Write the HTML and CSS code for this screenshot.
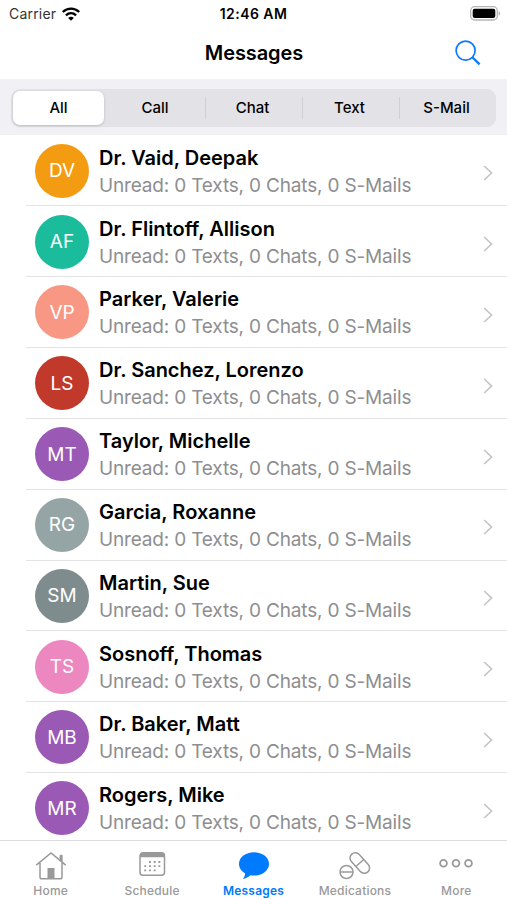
FILE: index.html
```
<!DOCTYPE html>
<html lang="en">
<head>
  <meta charset="UTF-8" />
  <meta name="viewport" content="width=device-width, initial-scale=1.0"/>
  <title>Messages</title>
  <link rel="stylesheet" href="styles.css">
</head>
<body>
  <div class="app">
    <div class="status-bar">
      <div class="carrier">
        <span>Carrier</span>
        <svg width="18" height="14" viewBox="0 0 18 14" fill="none" stroke="#000" stroke-width="2.3">
          <path d="M.8 5C5.500 .4 12.500 .4 17.200 5"/>
          <path d="M3.900 8.300c3-2.800 7.200-2.800 10.200 0"/>
          <path d="M9 13.700 6.200 10.900c1.600-1.500 4-1.500 5.600 0z" fill="#000" stroke="none"/>
        </svg>
      </div>
      <div class="time">12:46 AM</div>
      <div class="battery">
        <svg width="31" height="15" viewBox="0 0 31 15">
          <rect x=".7" y=".7" width="26.600" height="13.300" rx="4" fill="#fff" stroke="#b5b5b5" stroke-width="1.300"/>
          <rect x="2.700" y="2.700" width="22.600" height="9.400" rx="2" fill="#000"/>
          <path d="M28.600 5.200c2 .6 2 3.800 0 4.400z" fill="#b5b5b5"/>
        </svg>
      </div>
    </div>

    <div class="nav-bar">
      <h1>Messages</h1>
      <svg class="search" width="26" height="26" viewBox="0 0 26 26" fill="none" stroke="#0a7aff">
        <circle cx="10.600" cy="10.600" r="9.500" stroke-width="1.700"/>
        <path d="M17.300 17.300l7.300 7.100" stroke-width="2.300"/>
      </svg>
    </div>

    <div class="filter">
      <div class="segments">
        <div class="segment active">All</div>
        <div class="segment">Call</div>
        <div class="segment">Chat</div>
        <div class="segment">Text</div>
        <div class="segment">S-Mail</div>
      </div>
    </div>

    <div class="list">
      <div class="row">
        <div class="avatar orange">DV</div>
        <div class="info"><h2>Dr. Vaid, Deepak</h2><p>Unread: 0 Texts, 0 Chats, 0 S-Mails</p></div>
        <svg class="chevron" width="10" height="16" viewBox="0 0 10 16"><path d="M1.200 1l7.300 7-7.300 7"/></svg>
      </div>
      <div class="row">
        <div class="avatar green">AF</div>
        <div class="info"><h2>Dr. Flintoff, Allison</h2><p>Unread: 0 Texts, 0 Chats, 0 S-Mails</p></div>
        <svg class="chevron" width="10" height="16" viewBox="0 0 10 16"><path d="M1.200 1l7.300 7-7.300 7"/></svg>
      </div>
      <div class="row">
        <div class="avatar salmon">VP</div>
        <div class="info"><h2>Parker, Valerie</h2><p>Unread: 0 Texts, 0 Chats, 0 S-Mails</p></div>
        <svg class="chevron" width="10" height="16" viewBox="0 0 10 16"><path d="M1.200 1l7.300 7-7.300 7"/></svg>
      </div>
      <div class="row">
        <div class="avatar red">LS</div>
        <div class="info"><h2>Dr. Sanchez, Lorenzo</h2><p>Unread: 0 Texts, 0 Chats, 0 S-Mails</p></div>
        <svg class="chevron" width="10" height="16" viewBox="0 0 10 16"><path d="M1.200 1l7.300 7-7.300 7"/></svg>
      </div>
      <div class="row">
        <div class="avatar purple">MT</div>
        <div class="info"><h2>Taylor, Michelle</h2><p>Unread: 0 Texts, 0 Chats, 0 S-Mails</p></div>
        <svg class="chevron" width="10" height="16" viewBox="0 0 10 16"><path d="M1.200 1l7.300 7-7.300 7"/></svg>
      </div>
      <div class="row">
        <div class="avatar silver">RG</div>
        <div class="info"><h2>Garcia, Roxanne</h2><p>Unread: 0 Texts, 0 Chats, 0 S-Mails</p></div>
        <svg class="chevron" width="10" height="16" viewBox="0 0 10 16"><path d="M1.200 1l7.300 7-7.300 7"/></svg>
      </div>
      <div class="row">
        <div class="avatar gray">SM</div>
        <div class="info"><h2>Martin, Sue</h2><p>Unread: 0 Texts, 0 Chats, 0 S-Mails</p></div>
        <svg class="chevron" width="10" height="16" viewBox="0 0 10 16"><path d="M1.200 1l7.300 7-7.300 7"/></svg>
      </div>
      <div class="row">
        <div class="avatar pink">TS</div>
        <div class="info"><h2>Sosnoff, Thomas</h2><p>Unread: 0 Texts, 0 Chats, 0 S-Mails</p></div>
        <svg class="chevron" width="10" height="16" viewBox="0 0 10 16"><path d="M1.200 1l7.300 7-7.300 7"/></svg>
      </div>
      <div class="row">
        <div class="avatar purple">MB</div>
        <div class="info"><h2>Dr. Baker, Matt</h2><p>Unread: 0 Texts, 0 Chats, 0 S-Mails</p></div>
        <svg class="chevron" width="10" height="16" viewBox="0 0 10 16"><path d="M1.200 1l7.300 7-7.300 7"/></svg>
      </div>
      <div class="row">
        <div class="avatar purple">MR</div>
        <div class="info"><h2>Rogers, Mike</h2><p>Unread: 0 Texts, 0 Chats, 0 S-Mails</p></div>
        <svg class="chevron" width="10" height="16" viewBox="0 0 10 16"><path d="M1.200 1l7.300 7-7.300 7"/></svg>
      </div>
    </div>

    <div class="tab-bar">
      <div class="tab">
        <svg width="32" height="30" viewBox="0 0 32 30" fill="none" stroke="#999" stroke-width="1.500">
          <path d="M1.300 14.200 16 1.900l14.700 12.300M5 12v14q0 1.800 1.800 1.800h18.400q1.800 0 1.800-1.800V12"/>
          <path d="M25 4.200h2.200v7L25 9.200z" fill="#999" stroke-width=".8"/>
          <path d="M12.500 27.500V17h7v10.500z" fill="#999" stroke="none"/>
        </svg>
        <span>Home</span>
      </div>
      <div class="tab">
        <svg width="32" height="30" viewBox="0 0 32 30" fill="none" stroke="#999" stroke-width="1.500">
          <rect x="4" y="1.800" width="24.500" height="22.500" rx="3"/>
          <path d="M4 6.200V4q0-2.500 2.500-2.500h19.500q2.500 0 2.500 2.500v2.200z" fill="#999" stroke="none"/>
          <path d="M13 11h12M8.300 15.200H25M8.300 19.400h12" stroke-width="1.800" stroke-dasharray="1.900 2.800"/>
        </svg>
        <span>Schedule</span>
      </div>
      <div class="tab active">
        <svg width="32" height="30" viewBox="0 0 32 30" fill="#007aff">
          <path d="M16 1.300c8.300 0 15 5 15 11.600S24.300 24.600 16 24.600c-1.200 0-2.300-.1-3.400-.3-2 1.700-5 3.200-7.800 3.700 1.600-1.600 2.400-3.800 2.300-5.700C3.400 20.200 1 16.800 1 12.900 1 6.300 7.700 1.300 16 1.300z"/>
        </svg>
        <span>Messages</span>
      </div>
      <div class="tab">
        <svg width="32" height="30" viewBox="0 0 32 30" fill="none" stroke="#999" stroke-width="1.500">
          <circle cx="7.500" cy="21" r="6.500"/>
          <path d="M1 21h13"/>
          <g transform="rotate(48 20.800 12)">
            <rect x="8.800" y="6.700" width="24" height="10.600" rx="5.300"/>
            <path d="M20.800 6.700v10.600"/>
          </g>
        </svg>
        <span>Medications</span>
      </div>
      <div class="tab">
        <svg width="34" height="30" viewBox="0 0 34 30" fill="none" stroke="#999" stroke-width="1.800">
          <circle cx="4.500" cy="12.300" r="3.400"/>
          <circle cx="17" cy="12.300" r="3.400"/>
          <circle cx="29.500" cy="12.300" r="3.400"/>
        </svg>
        <span>More</span>
      </div>
    </div>
  </div>
</body>
</html>
```

FILE: styles.css
```
* {
  box-sizing: border-box;
}

body {
  font-family: Inter, "Liberation Sans", sans-serif;
  background: #fff;
  color: #000;
  margin: 0;
}

h1, h2, p {
  margin: 0;
}

svg {
  display: block;
  flex: none;
}

.app {
  display: flex;
  flex-direction: column;
  height: 900px;
  overflow: hidden;
}

.status-bar {
  display: grid;
  grid-template-columns: 1fr auto 1fr;
  align-items: center;
  height: 27px;
  padding: 0 6px 0 9px;
  font-size: 14px;
}

.carrier {
  display: flex;
  align-items: center;
  gap: 6px;
  color: #333;
  letter-spacing: 0.2px;
}

.time {
  margin-right: 3px;
  font-weight: 600;
  letter-spacing: 0.45px;
}

.battery {
  display: flex;
  justify-content: flex-end;
}

.nav-bar {
  display: grid;
  grid-template-columns: 1fr auto 1fr;
  align-items: center;
  height: 52px;
  padding: 0 26px;
}

.nav-bar h1 {
  grid-column: 2;
  padding-left: 1px;
  font-size: 20px;
  font-weight: 600;
  letter-spacing: -0.1px;
}

.search {
  justify-self: end;
}

.filter {
  height: 56px;
  padding: 10px 11px 8px;
  background: #f1f0f5;
}

.segments {
  display: grid;
  grid-template-columns: repeat(5, 1fr);
  height: 38px;
  border-radius: 9px;
  background: #e3e2e7;
}

.segment {
  display: flex;
  align-items: center;
  justify-content: center;
  padding: 0 3px 1px 0;
  font-size: 15px;
  font-weight: 500;
}

.segment.active {
  margin: 2px 4px 2px 2px;
  padding: 0 0 1px;
  border-radius: 7px;
  background: #fff;
  box-shadow: 0 1px 3px rgba(0,0,0,0.18);
}

.segment + .segment + .segment {
  padding: 0 2px 1px 0;
  background: linear-gradient(#d0cfd4, #d0cfd4) left center / 1px 22px no-repeat;
}

.list {
  flex: 1;
  padding-top: 0.5px;
  overflow: hidden;
}

.row {
  display: flex;
  align-items: center;
  height: 70.85px;
  margin-left: 26px;
  padding: 0.6px 14px 0 9px;
  border-bottom: 1px solid #e4e4e6;
}

.avatar {
  display: flex;
  flex: none;
  align-items: center;
  justify-content: center;
  width: 54px;
  height: 54px;
  margin-right: 10px;
  border-radius: 50%;
  color: #fff;
  font-size: 19px;
}

.orange { background: #f39c12; }
.green { background: #1abc9c; }
.salmon { background: #f79784; }
.red { background: #c0392b; }
.purple { background: #9b59b6; }
.silver { background: #95a5a6; }
.gray { background: #7f8c8d; }
.pink { background: #ec87bf; }

.info {
  flex: 1;
  padding-top: 2px;
  white-space: nowrap;
}

.info h2 {
  font-size: 20px;
  font-weight: 600;
  line-height: 27px;
}

.info p {
  color: #8e8e90;
  font-size: 19px;
  line-height: 27px;
  letter-spacing: -0.17px;
}

.chevron {
  margin-top: 5px;
  fill: none;
  stroke: #c5c5c7;
  stroke-width: 1.7;
}

.tab-bar {
  display: flex;
  height: 60px;
  border-top: 1px solid #dcdcdc;
}

.tab {
  display: flex;
  flex: 1;
  flex-direction: column;
  align-items: center;
  padding-top: 10px;
  color: #999;
  font-size: 12px;
  font-weight: 500;
  letter-spacing: 0.2px;
}

.tab span {
  line-height: 18px;
  margin-top: 1px;
}

.tab.active {
  color: #007aff;
  font-weight: 600;
}
```
